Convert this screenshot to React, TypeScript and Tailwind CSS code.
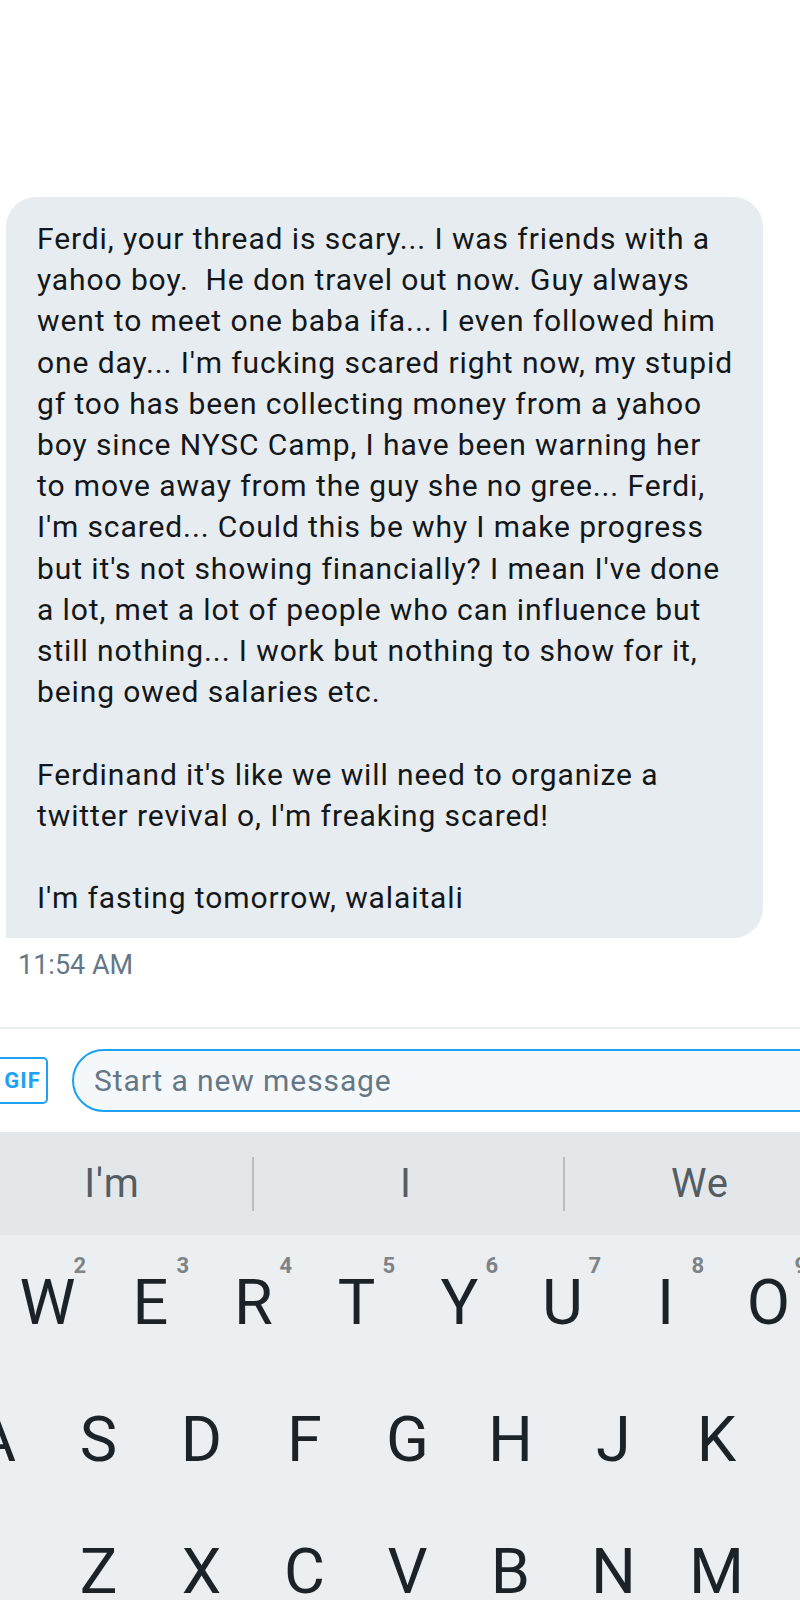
const lines1 = [
  "Ferdi, your thread is scary... I was friends with a",
  "yahoo boy.  He don travel out now. Guy always",
  "went to meet one baba ifa... I even followed him",
  "one day... I'm fucking scared right now, my stupid",
  "gf too has been collecting money from a yahoo",
  "boy since NYSC Camp, I have been warning her",
  "to move away from the guy she no gree... Ferdi,",
  "I'm scared... Could this be why I make progress",
  "but it's not showing financially? I mean I've done",
  "a lot, met a lot of people who can influence but",
  "still nothing... I work but nothing to show for it,",
  "being owed salaries etc.",
];

const lines2 = [
  "Ferdinand it's like we will need to organize a",
  "twitter revival o, I'm freaking scared!",
];

type Key = { l: string; n?: string };

const row1: Key[] = [
  { l: "Q", n: "1" },
  { l: "W", n: "2" },
  { l: "E", n: "3" },
  { l: "R", n: "4" },
  { l: "T", n: "5" },
  { l: "Y", n: "6" },
  { l: "U", n: "7" },
  { l: "I", n: "8" },
  { l: "O", n: "9" },
];
const row2: Key[] = ["A", "S", "D", "F", "G", "H", "J", "K", "L"].map((l) => ({ l }));
const row3: Key[] = ["Z", "X", "C", "V", "B", "N", "M"].map((l) => ({ l }));

const KeyCap = ({ k }: { k: Key }) => (
  <div className="relative flex h-full w-[103px] shrink-0 items-center justify-center">
    <span className="text-[63px] leading-none text-[#1b2329]">{k.l}</span>
    {k.n && (
      <span className="absolute right-[13px] top-[20px] text-[22px] font-bold leading-none text-[#7d8387]">
        {k.n}
      </span>
    )}
  </div>
);

export default function App() {
  return (
    <div
      className="h-[1600px] w-[800px] overflow-hidden bg-white"
      style={{ fontFamily: "Roboto, 'Liberation Sans', sans-serif" }}
    >
      <div className="h-[197px]" />

      {/* message bubble */}
      <div className="ml-[6px] w-[757px] rounded-[30px] rounded-bl-none bg-[#e6ecf0] pb-[20px] pl-[31px] pt-[21px] text-[30px] leading-[41.2px] tracking-[0.9px] text-[#14171a]">
        {lines1.map((t, i) => (
          <div key={i} className="whitespace-pre">
            {t}
          </div>
        ))}
        <div className="h-[41.2px]" />
        {lines2.map((t, i) => (
          <div key={i} className="whitespace-pre">
            {t}
          </div>
        ))}
        <div className="h-[41.2px]" />
        <div>I'm fasting tomorrow, walaitali</div>
      </div>

      <div className="pl-[18px] pt-[10px] text-[27px] leading-[34px] text-[#657786]">11:54 AM</div>

      {/* composer */}
      <div className="mt-[45px] border-t-2 border-[#e6ecf0]">
        <div className="flex items-center gap-[24px] pt-[20px] pb-[20px]">
          <div className="-ml-[4px] flex h-[47px] w-[52px] shrink-0 items-center justify-center rounded-[5px] border-2 border-[#1da1f2]">
            <span className="pl-[1px] text-[22px] font-bold leading-none tracking-[1px] text-[#1da1f2]">GIF</span>
          </div>
          <div className="flex h-[63px] w-[780px] shrink-0 items-center rounded-full border-2 border-[#1da1f2] bg-[#f5f8fa] pl-[20px]">
            <span className="text-[30px] tracking-[0.9px] text-[#657786]">Start a new message</span>
          </div>
        </div>
      </div>

      {/* keyboard suggestions */}
      <div className="flex h-[103px] items-center overflow-hidden bg-[#e3e7ea] text-[40px] tracking-[1px] text-[#545d63]">
        <div className="flex w-[224px] shrink-0 justify-center">I'm</div>
        <div className="ml-[28px] h-[54px] w-[2px] shrink-0 bg-[#b9bec2]" />
        <div className="flex w-[304px] shrink-0 justify-center">I</div>
        <div className="ml-[5px] h-[54px] w-[2px] shrink-0 bg-[#b9bec2]" />
        <div className="flex w-[270px] shrink-0 justify-center">We</div>
      </div>

      {/* keys */}
      <div className="bg-[#eceff1] pb-[40px]">
        <div className="flex h-[134px] -ml-[107px]">
          {row1.map((k) => (
            <KeyCap key={k.l} k={k} />
          ))}
        </div>
        <div className="flex h-[140px] -ml-[56px]">
          {row2.map((k) => (
            <KeyCap key={k.l} k={k} />
          ))}
        </div>
        <div className="flex h-[124px] ml-[47px]">
          {row3.map((k) => (
            <KeyCap key={k.l} k={k} />
          ))}
        </div>
      </div>
    </div>
  );
}
